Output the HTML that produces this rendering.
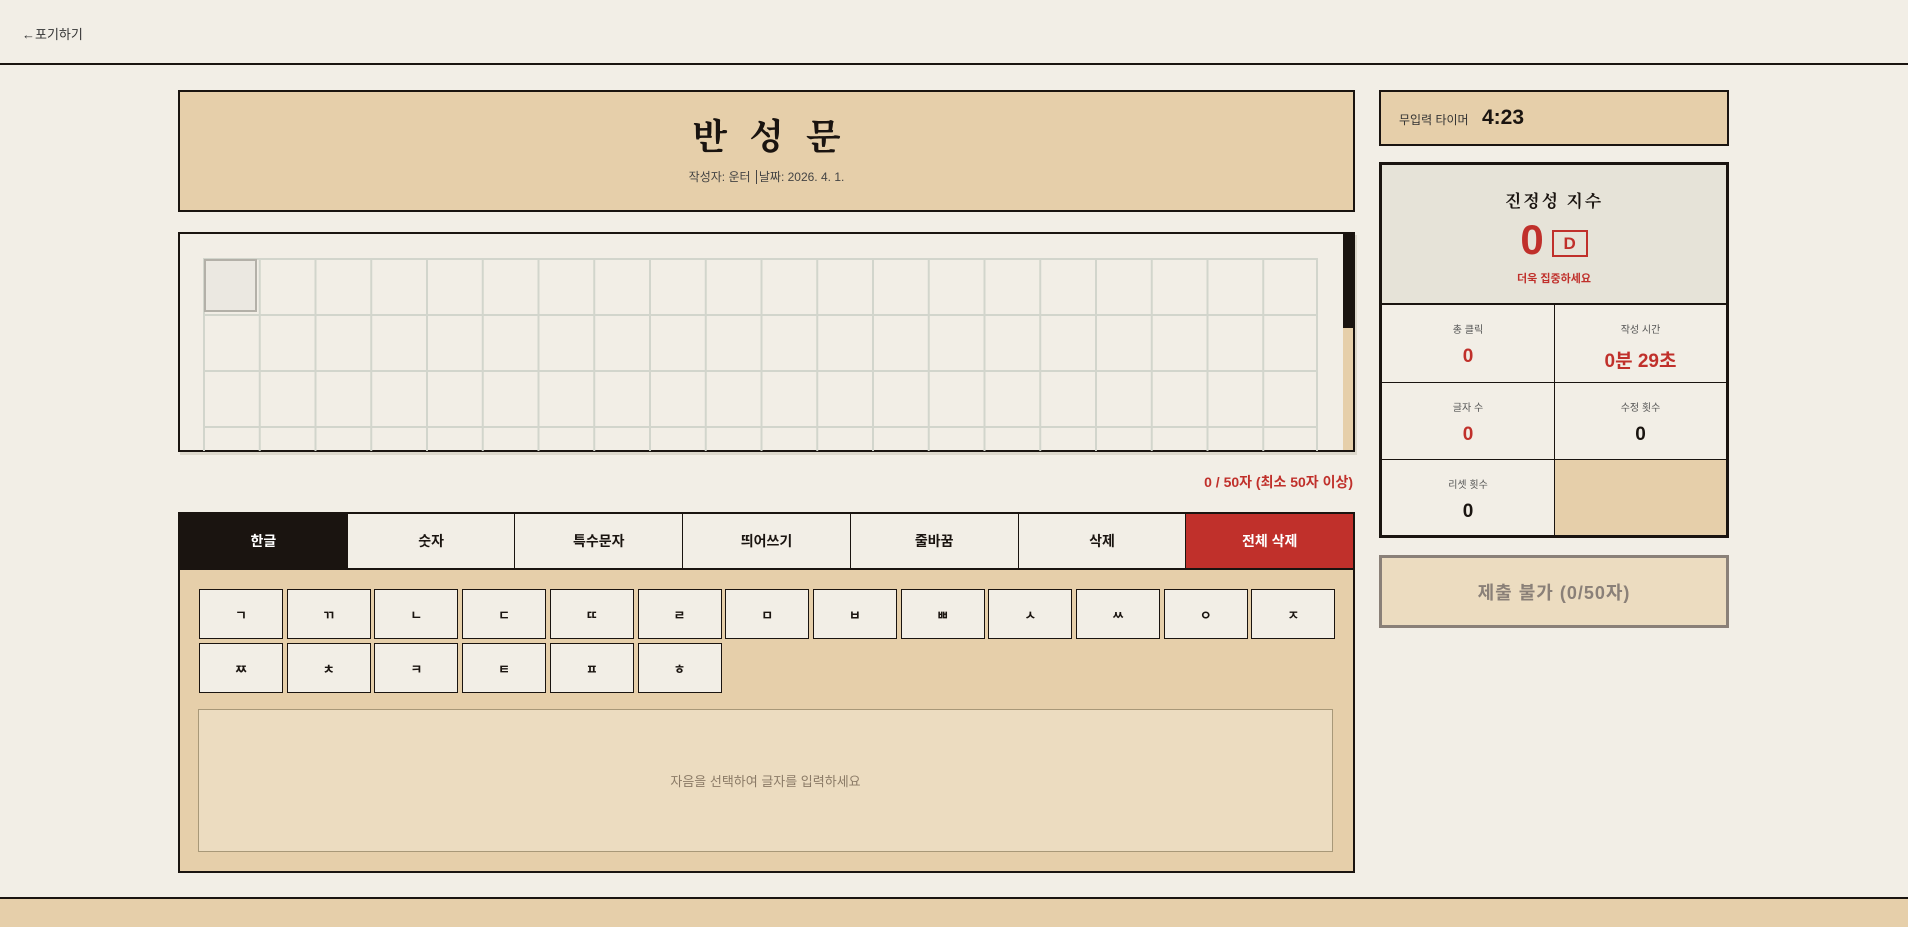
<!DOCTYPE html>
<html><head><meta charset="utf-8"><style>
*{box-sizing:border-box;margin:0;padding:0}
body{width:1908px;height:927px;background:#f2eee6;font-family:"Liberation Sans","Noto Sans CJK KR",sans-serif;color:#1a1410;position:relative;overflow:hidden}
.a{position:absolute}
.serif{font-family:"Liberation Serif","Noto Serif CJK KR",serif}
.grid{position:absolute;left:203px;top:258px;width:1115px;height:193px;overflow:hidden;
background-image:linear-gradient(to right,#d2d5cc 2px,transparent 2px),linear-gradient(to bottom,#d2d5cc 2px,transparent 2px);
background-size:55.75px 56px;border-right:2px solid #d2d5cc}
.tabs{display:flex}
.tab{flex:1;height:54px;display:flex;align-items:center;justify-content:center;font-size:14px;font-weight:bold;border-left:1px solid #1a1410;background:#f2eee6}
.key{position:absolute;width:84px;height:50px;border:1px solid #1a1410;background:#f2eee6;display:flex;align-items:center;justify-content:center;font-size:13px;font-weight:bold}
.cell{position:absolute;width:172px;height:77px;text-align:center}
.lbl{font-size:10px;color:#555;margin-top:16px}
.val{font-size:19px;font-weight:bold;margin-top:10px}
.red{color:#c0302b}
</style></head><body>
<div class="a" style="left:22px;top:24px;font-size:13px;color:#333">←포기하기</div>
<div class="a" style="left:0;top:63px;width:1908px;height:2px;background:#1a1410"></div>

<div class="a" style="left:178px;top:90px;width:1177px;height:122px;background:#e6cfaa;border:2px solid #1a1410">
<div class="serif" style="text-align:center;font-size:36px;font-weight:bold;letter-spacing:22px;margin-top:17px;padding-left:22px">반성문</div>
<div style="text-align:center;font-size:12px;color:#444;margin-top:8px">작성자: 운터 <span style="border-left:1px solid #444;margin:0 2px"></span> 날짜: 2026. 4. 1.</div>
</div>

<div class="a" style="left:178px;top:232px;width:1177px;height:220px;border:2px solid #1a1410;box-shadow:2px 3px 0 #ddd8cc"></div>
<div class="grid"></div>
<div class="a" style="left:204px;top:259px;width:53px;height:53px;border:2px solid #b3b0a8;background:#ebe8e1"></div>
<div class="a" style="left:1343px;top:234px;width:10px;height:94px;background:#1a1410"></div>
<div class="a" style="left:1343px;top:328px;width:10px;height:122px;background:#e6cfaa"></div>

<div class="a red" style="right:555px;top:472px;font-size:14px;font-weight:bold">0 / 50자 (최소 50자 이상)</div>

<div class="a" style="left:178px;top:512px;width:1177px;height:361px;background:#e6cfaa;border:2px solid #1a1410">
<div class="tabs" style="border-bottom:2px solid #1a1410">
<div class="tab" style="background:#1a1410;color:#fff;border-left:none">한글</div>
<div class="tab">숫자</div><div class="tab">특수문자</div><div class="tab">띄어쓰기</div><div class="tab">줄바꿈</div><div class="tab">삭제</div>
<div class="tab" style="background:#c0302b;color:#fff">전체 삭제</div>
</div>
</div>
<div id="keys"></div>
<div class="a" style="left:198px;top:709px;width:1135px;height:143px;background:#ecdcc0;border:1px solid #a89878;display:flex;align-items:center;justify-content:center;font-size:13px;color:#8a7a66">자음을 선택하여 글자를 입력하세요</div>

<div class="a" style="left:0;top:897px;width:1908px;height:2px;background:#1a1410"></div>
<div class="a" style="left:0;top:899px;width:1908px;height:28px;background:#e6cfaa"></div>

<div class="a" style="left:1379px;top:90px;width:350px;height:56px;background:#e6cfaa;border:2px solid #1a1410">
<span class="a" style="left:18px;top:19px;font-size:12px;color:#333">무입력 타이머</span>
<span class="a" style="left:101px;top:14px;font-size:21px;font-weight:bold">4:23</span>
</div>

<div class="a" style="left:1379px;top:162px;width:350px;height:376px;border:3px solid #1a1410;background:#f2eee6;overflow:hidden">
<div style="height:140px;background:#e6e3d8;border-bottom:2px solid #1a1410;text-align:center">
<div class="serif" style="font-size:17px;font-weight:bold;padding-top:22px;letter-spacing:2px">진정성 지수</div>
<div style="margin-top:6px;display:flex;justify-content:center;align-items:center;gap:8px"><span class="red" style="font-size:42px;font-weight:bold;line-height:44px">0</span><span class="red" style="border:2px solid #c0302b;font-size:17px;font-weight:bold;width:36px;height:27px;line-height:23px;margin-top:6px">D</span></div>
<div class="red" style="font-size:11px;font-weight:bold;margin-top:8px">더욱 집중하세요</div>
</div>
<div class="cell" style="left:0;top:140px"><div class="lbl">총 클릭</div><div class="val red">0</div></div>
<div class="cell" style="left:172px;top:140px;border-left:1px solid #1a1410"><div class="lbl">작성 시간</div><div class="val red">0분 29초</div></div>
<div class="a" style="left:0;top:217px;width:344px;height:1px;background:#1a1410"></div>
<div class="cell" style="left:0;top:218px"><div class="lbl">글자 수</div><div class="val red">0</div></div>
<div class="cell" style="left:172px;top:218px;border-left:1px solid #1a1410"><div class="lbl">수정 횟수</div><div class="val">0</div></div>
<div class="a" style="left:0;top:294px;width:344px;height:1px;background:#1a1410"></div>
<div class="cell" style="left:0;top:295px"><div class="lbl">리셋 횟수</div><div class="val">0</div></div>
<div class="cell" style="left:172px;top:295px;height:80px;border-left:1px solid #1a1410;background:#e6cfaa"></div>
</div>

<div class="a" style="left:1379px;top:555px;width:350px;height:73px;background:#ecdcc0;border:3px solid #8a8078;display:flex;align-items:center;justify-content:center;font-size:18px;font-weight:bold;color:#8a8078;letter-spacing:1px">제출 불가 (0/50자)</div>

<script>
var k=["ㄱ","ㄲ","ㄴ","ㄷ","ㄸ","ㄹ","ㅁ","ㅂ","ㅃ","ㅅ","ㅆ","ㅇ","ㅈ","ㅉ","ㅊ","ㅋ","ㅌ","ㅍ","ㅎ"],h="";
for(var i=0;i<k.length;i++){var r=i<13?0:1,c=i<13?i:i-13;h+='<div class="key" style="left:'+(199+c*87.7)+'px;top:'+(589+r*54)+'px">'+k[i]+'</div>';}
document.getElementById("keys").innerHTML=h;
</script>
</body></html>
